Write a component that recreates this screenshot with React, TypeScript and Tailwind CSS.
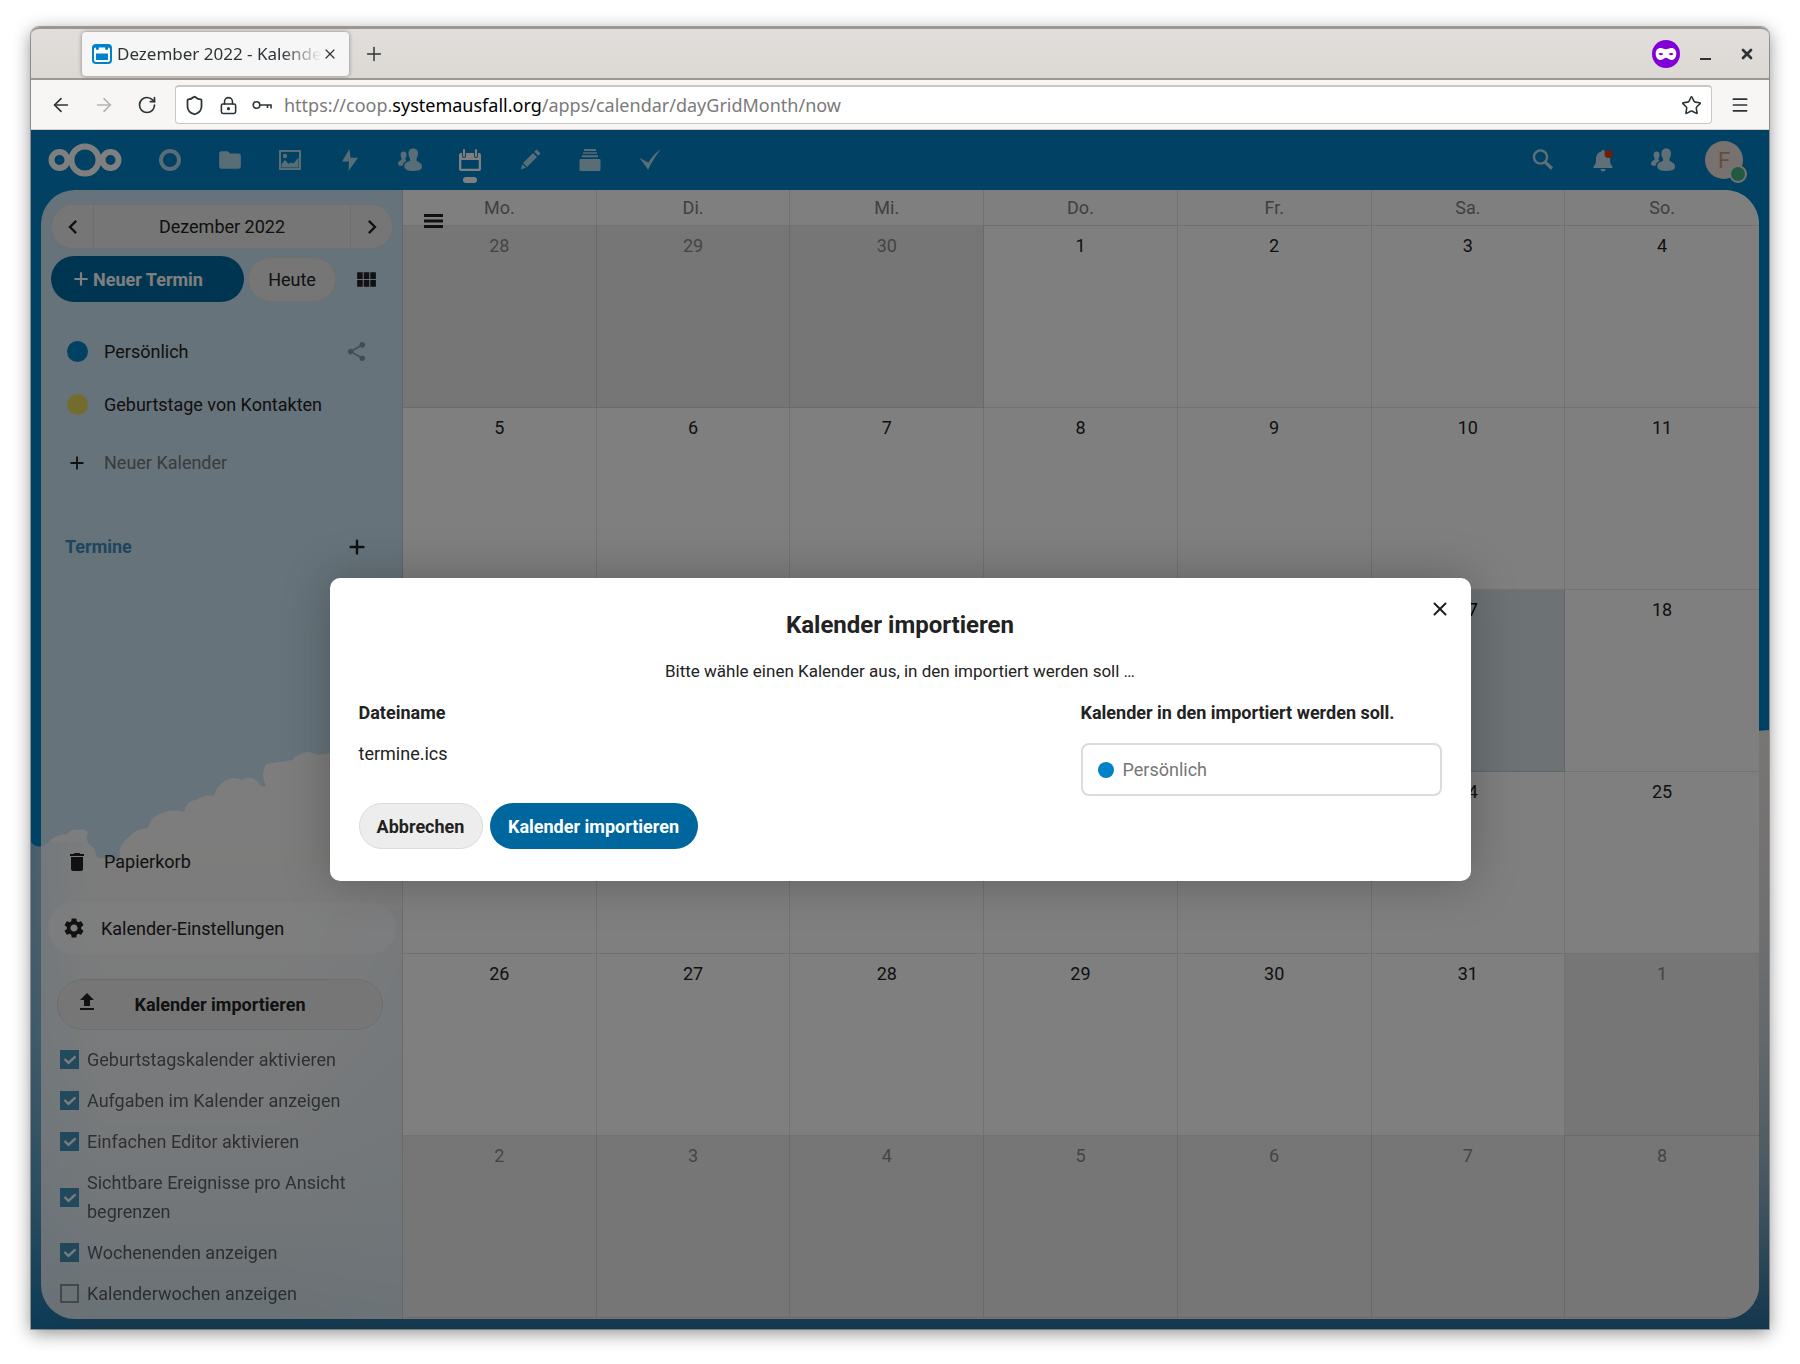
import { useState } from "react";
import type { ReactNode } from "react";
import { ArrowLeft, ArrowRight, Plus, X, Star, Menu, LockKeyhole, Shield, RotateCw } from "lucide-react";
import {
  MdChevronLeft,
  MdChevronRight,
  MdDelete,
  MdFileUpload,
  MdFolder,
  MdSettings,
  MdShare,
  MdViewModule,
} from "react-icons/md";

const WEEKDAYS = ["Mo.", "Di.", "Mi.", "Do.", "Fr.", "Sa.", "So."];

const WEEKS = [
  [28, 29, 30, 1, 2, 3, 4],
  [5, 6, 7, 8, 9, 10, 11],
  [12, 13, 14, 15, 16, 17, 18],
  [19, 20, 21, 22, 23, 24, 25],
  [26, 27, 28, 29, 30, 31, 1],
  [2, 3, 4, 5, 6, 7, 8],
];

const SETTINGS = [
  { id: "birthday", label: "Geburtstagskalender aktivieren", checked: true },
  { id: "tasks", label: "Aufgaben im Kalender anzeigen", checked: true },
  { id: "simple", label: "Einfachen Editor aktivieren", checked: true },
  { id: "limit", label: "Sichtbare Ereignisse pro Ansicht begrenzen", checked: true },
  { id: "weekends", label: "Wochenenden anzeigen", checked: true },
  { id: "weeks", label: "Kalenderwochen anzeigen", checked: false },
];

const NextcloudLogo = () => (
  <svg className="w-[74px] h-[36px]" viewBox="0 0 74 36" fill="none" stroke="#fff">
    <circle cx="11.5" cy="18" r="8" strokeWidth="6" />
    <circle cx="37" cy="18" r="13.6" strokeWidth="6" />
    <circle cx="62.5" cy="18" r="8" strokeWidth="6" />
  </svg>
);

const DashboardIcon = () => (
  <svg className="w-6 h-6" viewBox="0 0 24 24" fill="none" stroke="currentColor">
    <circle cx="12" cy="12" r="9" strokeWidth="4" />
  </svg>
);

const PhotosIcon = () => (
  <svg className="w-6 h-6" viewBox="0 0 24 24" fill="currentColor">
    <path fillRule="evenodd" d="M1 2h22v20H1zM3 4v16h18V4z" />
    <circle cx="7" cy="8" r="2.2" />
    <path d="M3.5 19.500V16l3.500-4 3.500 4 2-1.500 3 1 5-6v10z" />
  </svg>
);

const ActivityIcon = () => (
  <svg className="w-6 h-6" viewBox="0 0 24 24" fill="currentColor">
    <path d="M11.500 1L4 13.500h7l-.5 9.500L20 9.800h-7.500z" />
  </svg>
);

const ContactsIcon = () => (
  <svg className="w-6 h-6" viewBox="0 0 24 24" fill="currentColor">
    <path d="M15 0.500c-3 0-4.700 2.200-4.500 5.300.1 2 .6 3.500 1.500 4.700v2.300c-2 1-5 1.700-5.600 4-.6 3 .6 6.200 8.600 6.200s9-2 9-4.700c0-3-3.500-4-5.500-5.500v-2.300c.9-1.200 1.400-2.700 1.500-4.700.2-3.100-1.500-5.300-5-5.300z" />
    <path d="M5.500 3.500C3.500 3.500 2.500 5 2.600 7c.1 1.500.5 2.400 1 3v1.800C2 12.800 0 13.500 0 15.800 0 17.600 1.500 18 4.500 18c.3-2.800 2-4 4.300-5.200-.7-.4-1-.6-1.300-1V10c.5-.6 1-1.500 1.100-3 .1-2-1-3.500-3.100-3.500z" />
  </svg>
);

const CalendarIcon = () => (
  <svg className="w-6 h-6" viewBox="0 0 24 24" fill="currentColor">
    <path fillRule="evenodd" d="M1 7a2 2 0 0 1 2-2h1v3a2 2 0 0 0 4 0V5h8v3a2 2 0 0 0 4 0V5h1a2 2 0 0 1 2 2v14a2 2 0 0 1-2 2H3a2 2 0 0 1-2-2zM3.300 12v8.700h17.400V12z" />
    <rect x="5" y="1" width="2" height="8" rx="1" />
    <rect x="17" y="1" width="2" height="8" rx="1" />
  </svg>
);

const NotesIcon = () => (
  <svg className="w-6 h-6" viewBox="0 0 24 24" fill="currentColor">
    <path d="M18.500 1.500l4 4-2.300 2.200-3.900-3.900zM15 5l4 4-10 10-4-4zM4.200 16.200l3.700 3.600L3 21.500z" />
  </svg>
);

const DeckIcon = () => (
  <svg className="w-6 h-6" viewBox="0 0 24 24" fill="currentColor">
    <path d="M6 1h12v2H6zM5 4.200h14v1.600H5zM4 7.200h16v2H4zM2.500 11h19a1 1 0 0 1 1 1v9.500a1.500 1.500 0 0 1-1.500 1.500H3a1.500 1.500 0 0 1-1.500-1.500V12a1 1 0 0 1 1-1z" />
  </svg>
);

const TasksIcon = () => (
  <svg className="w-6 h-6" viewBox="0 0 24 24" fill="currentColor">
    <path d="M22.500 1.500C18 4.500 13.500 9 10.500 14.500L1.500 10C4.500 14 7.500 17.500 10 22 13.500 14.500 17.500 8.500 22.500 1.500z" />
  </svg>
);

const SearchIcon = () => (
  <svg className="w-6 h-6" viewBox="0 0 24 24" fill="none" stroke="currentColor">
    <circle cx="9.500" cy="9" r="6.600" strokeWidth="2.400" />
    <path d="M14.500 14.500l6.500 6" strokeWidth="3.200" />
  </svg>
);

const BellIcon = () => (
  <svg className="w-6 h-6" viewBox="0 0 24 24" fill="currentColor">
    <path d="M12 2c-1 0-1.500.6-1.500 1.400C6.500 4.300 5 7.500 5 11c0 4-.8 6-2.500 7.500V20h19v-1.500C19.800 17 19 15 19 11c0-3.500-1.500-6.700-5.500-7.600C13.500 2.600 13 2 12 2zM9.500 21a2.500 2.500 0 0 0 5 0z" />
    <circle cx="17.500" cy="6" r="4" fill="#d6411b" />
  </svg>
);

const HamburgerIcon = () => (
  <svg className="w-5 h-[14px]" viewBox="0 0 20 14" fill="currentColor">
    <path d="M0 0h19v3H0zM0 5.500h19v3H0zM0 11h19v3H0z" />
  </svg>
);

const KeyIcon = () => (
  <svg className="w-5 h-5" viewBox="0 0 20 20" fill="none" stroke="currentColor" strokeWidth="1.600">
    <circle cx="4.500" cy="10" r="3.300" />
    <path d="M8 10h11v3.500M15.500 10v3" />
  </svg>
);

const PrivateMask = () => (
  <svg className="w-7 h-7" viewBox="0 0 28 28">
    <circle cx="14" cy="14" r="14" fill="#8000d7" />
    <path fillRule="evenodd" fill="#fff" d="M8.500 8c2.500 0 4 1.300 5.500 1.300S17 8 19.500 8c3 0 4.800 2.400 4.800 5.500 0 4-2 6.500-5 6.500-2.600 0-3.700-2.200-5.300-2.200S11.300 20 8.700 20c-3 0-5-2.500-5-6.500C3.700 10.400 5.500 8 8.500 8zM6.300 14c1.200 1.500 3.800 1.500 5.200 0-1.400-1.500-4-1.500-5.200 0zM16.500 14c1.400 1.500 4 1.500 5.200 0-1.200-1.500-3.800-1.500-5.200 0z" />
  </svg>
);

const Favicon = () => (
  <svg className="w-5 h-5 shrink-0" viewBox="0 0 20 20">
    <rect width="20" height="20" rx="4" fill="#0082c9" />
    <path fillRule="evenodd" fill="#fff" d="M2 5.500A2 2 0 0 1 4 3.500v1.200a1.400 1.400 0 0 0 2.800 0V3.500h6.400v1.200a1.400 1.400 0 0 0 2.800 0V3.500a2 2 0 0 1 2 2V16a2 2 0 0 1-2 2H4a2 2 0 0 1-2-2zM4 9.500V16h12V9.500z" />
  </svg>
);

// Sky with a bank of clouds, the wallpaper behind the app
const Wallpaper = () => (
  <svg className="absolute inset-0 w-full h-full" viewBox="0 0 1738 1199" preserveAspectRatio="none">
    <defs>
      <linearGradient id="cloud" x1="0" y1="560" x2="0" y2="1199" gradientUnits="userSpaceOnUse">
        <stop offset="0" stopColor="#f4efec" />
        <stop offset="0.35" stopColor="#e2e0e0" />
        <stop offset="0.55" stopColor="#c6d2da" />
        <stop offset="0.7" stopColor="#a3bccb" />
        <stop offset="0.82" stopColor="#7ba3bc" />
        <stop offset="0.95" stopColor="#3c7ba2" />
        <stop offset="1" stopColor="#266f9c" />
      </linearGradient>
      <linearGradient id="edge" x1="0" x2="70" gradientUnits="userSpaceOnUse">
        <stop offset="0" stopColor="#0082c9" stopOpacity="0.4" />
        <stop offset="1" stopColor="#0082c9" stopOpacity="0" />
      </linearGradient>
      <linearGradient id="haze" x1="250" x2="372" gradientUnits="userSpaceOnUse">
        <stop offset="0" stopColor="#5b9cc8" stopOpacity="0" />
        <stop offset="1" stopColor="#5b9cc8" stopOpacity="0.4" />
      </linearGradient>
    </defs>
    <rect width="1738" height="1199" fill="#0082c9" />
    <path
      fill="url(#cloud)"
      d="M0 712q6 8 16 2q8-10 20-10q4-6 12-4q5-2 9 2q-4 10 6 16q2 10 6 10l8 0q8 6 12-2q-2-12 8-18q8-10 20-10q3-12 12-14q10-6 24-2q3-12 12-12q8-6 18-4q2-10 12-16q8-4 16 0q8-6 16 2q4 6 8 4q-6-12 0-22q14-2 26-4q8-8 18-8q6 4 14 2l60-12L900 560L1500 620L1738 600V1199H0z"
    />
    <rect y="712" width="70" height="487" fill="url(#edge)" />
    <rect x="250" y="780" width="122" height="409" fill="url(#haze)" />
  </svg>
);

const APPS = [
  { name: "Dashboard", icon: <DashboardIcon /> },
  { name: "Dateien", icon: <MdFolder className="w-[26px] h-[26px]" /> },
  { name: "Fotos", icon: <PhotosIcon /> },
  { name: "Aktivitäten", icon: <ActivityIcon /> },
  { name: "Kontakte", icon: <ContactsIcon /> },
  { name: "Kalender", icon: <CalendarIcon />, active: true },
  { name: "Notizen", icon: <NotesIcon /> },
  { name: "Deck", icon: <DeckIcon /> },
  { name: "Aufgaben", icon: <TasksIcon /> },
];

function BrowserChrome() {
  return (
    <div className="font-['Noto_Sans',sans-serif] text-[#2e3436]">
      <div className="flex items-center h-[53px] pl-[51px] pr-[14px] rounded-t-lg border-t-2 border-b-2 border-[#9b9794] bg-gradient-to-b from-[#e2dedb] to-[#dcd8d4]">
        <div className="flex items-center w-[267px] h-11 pl-[10px] pr-3 rounded bg-[#f6f6f6] shadow-[0_0_4px_rgba(0,0,0,0.4)]">
          <Favicon />
          <span className="flex-1 ml-[5px] whitespace-nowrap text-[17px] leading-6 [mask-image:linear-gradient(to_right,#000_80%,transparent)]">
            Dezember 2022 - Kalende
          </span>
          <button aria-label="Tab schließen">
            <X className="w-4 h-4" strokeWidth={1.8} />
          </button>
        </div>
        <button className="ml-[14px]" aria-label="Neuer Tab">
          <Plus className="w-[22px] h-[22px]" strokeWidth={1.6} />
        </button>
        <div className="flex items-center ml-auto">
          <PrivateMask />
          <button className="flex items-end w-[11px] h-3 ml-5" aria-label="Minimieren">
            <span className="w-full h-[2px] bg-[#2e3436]" />
          </button>
          <button className="ml-7" aria-label="Schließen">
            <X className="w-4 h-4" strokeWidth={4} />
          </button>
        </div>
      </div>
      <div className="flex items-center h-[50px] px-[19px] border-b border-[#d3cfcb] bg-[#f7f6f5]">
        <button aria-label="Zurück">
          <ArrowLeft className="w-[22px] h-[22px]" strokeWidth={1.8} />
        </button>
        <button className="ml-[21px] text-[#b4b4b4]" aria-label="Vor">
          <ArrowRight className="w-[22px] h-[22px]" strokeWidth={1.8} />
        </button>
        <button className="ml-[22px]" aria-label="Neu laden">
          <RotateCw className="w-5 h-5" strokeWidth={2} />
        </button>
        <div className="flex flex-1 items-center h-[39px] ml-[18px] pl-2 pr-[9px] rounded border border-t-2 border-[#cdc7c2] bg-white">
          <Shield className="w-[21px] h-[21px]" strokeWidth={2} />
          <LockKeyhole className="w-[19px] h-[19px] ml-[14px]" strokeWidth={2} />
          <span className="ml-[14px]">
            <KeyIcon />
          </span>
          <span className="ml-3 text-[18px] leading-6 text-[#7a7a7a]">
            https://coop.<span className="text-black">systemausfall.org</span>/apps/calendar/dayGridMonth/now
          </span>
          <button className="ml-auto" aria-label="Lesezeichen">
            <Star className="w-[21px] h-[21px]" strokeWidth={1.8} />
          </button>
        </div>
        <button className="ml-[18px]" aria-label="Menü">
          <Menu className="w-5 h-5" strokeWidth={2} />
        </button>
      </div>
    </div>
  );
}

function AppHeader() {
  return (
    <header className="relative flex items-center h-[60px] pl-[17px] pr-[26px] bg-[#0082c9] text-white">
      <a href="#home" aria-label="Nextcloud">
        <NextcloudLogo />
      </a>
      <nav className="flex ml-[18px]">
        {APPS.map((app) => (
          <a
            key={app.name}
            href={`#${app.name}`}
            aria-label={app.name}
            className={`relative flex items-center justify-center w-[60px] h-[60px] ${app.active ? "" : "text-white/70"}`}
          >
            {app.icon}
            {app.active && <span className="absolute bottom-[7px] w-[14px] h-[6px] rounded-full bg-white" />}
          </a>
        ))}
      </nav>
      <div className="flex items-center ml-auto text-white/75">
        <button className="flex justify-center w-[60px]" aria-label="Suche">
          <SearchIcon />
        </button>
        <button className="flex justify-center w-[60px]" aria-label="Benachrichtigungen">
          <BellIcon />
        </button>
        <button className="flex justify-center w-[60px]" aria-label="Kontakte">
          <ContactsIcon />
        </button>
        <button
          className="relative flex items-center justify-center w-[38px] h-[38px] ml-3 rounded-full bg-[#efe4df] text-[22px] text-[#d09b76]"
          aria-label="Konto"
        >
          F
          <span className="absolute -right-1 -bottom-1 w-[18px] h-[18px] rounded-full border-2 border-[#e8e8e8] bg-[#49b382]" />
        </button>
      </div>
    </header>
  );
}

function SideRow({ icon, children, action }: { icon: ReactNode; children: ReactNode; action?: ReactNode }) {
  return (
    <div className="flex items-center h-[53px] pl-6 pr-[34px]">
      <span className="flex justify-center w-6 mr-[15px]">{icon}</span>
      {children}
      {action && <span className="flex ml-auto">{action}</span>}
    </div>
  );
}

function Sidebar() {
  const [settings, setSettings] = useState(SETTINGS);

  const toggle = (id: string) => {
    setSettings(settings.map((s) => (s.id === id ? { ...s, checked: !s.checked } : s)));
  };

  return (
    <aside className="flex flex-col w-[362px] shrink-0 border-r border-black/10 bg-white/80 text-[#222]">
      <div className="flex h-[45px] mt-[14px] ml-[10px] mr-[9px] rounded-full border border-[#e0e0e0] bg-[#ededed]">
        <button className="flex items-center justify-center w-[41px]" aria-label="Vorheriger Monat">
          <MdChevronLeft className="w-7 h-7" />
        </button>
        <button className="flex-1 border-x border-[#dbdbdb]">Dezember 2022</button>
        <button className="flex items-center justify-center w-[41px]" aria-label="Nächster Monat">
          <MdChevronRight className="w-7 h-7" />
        </button>
      </div>
      <div className="flex items-center mt-[7px] pl-[10px]">
        <button className="flex items-center w-[193px] h-[46px] pl-5 rounded-full bg-[#006aa3] font-bold text-white">
          <Plus className="w-5 h-5 mr-[2px]" strokeWidth={2.6} />
          Neuer Termin
        </button>
        <button className="w-[88px] h-[45px] ml-1 rounded-full border border-[#e0e0e0] bg-[#ededed]">Heute</button>
        <button className="ml-[18px]" aria-label="Ansicht wechseln">
          <MdViewModule className="w-[25px] h-[25px]" />
        </button>
      </div>

      <div className="mt-[23px]">
        <SideRow
          icon={<span className="w-[21px] h-[21px] rounded-full bg-[#0082c9]" />}
          action={
            <button aria-label="Kalender teilen" className="text-[#222]/40">
              <MdShare className="w-[23px] h-[23px]" />
            </button>
          }
        >
          Persönlich
        </SideRow>
        <SideRow icon={<span className="w-[21px] h-[21px] rounded-full bg-[#e9d859]" />}>Geburtstage von Kontakten</SideRow>
      </div>
      <div className="mt-[5px] text-[#767676]">
        <SideRow icon={<Plus className="w-5 h-5 text-[#222]" strokeWidth={2.2} />}>Neuer Kalender</SideRow>
      </div>
      <div className="flex items-center h-[53px] mt-[31px] pl-6 pr-[34px]">
        <h2 className="font-bold text-[#3e8cb8]">Termine</h2>
        <button className="ml-auto" aria-label="Termin hinzufügen">
          <Plus className="w-[22px] h-[22px]" strokeWidth={2.6} />
        </button>
      </div>

      <div className="mt-auto">
        <SideRow icon={<MdDelete className="w-6 h-6" />}>Papierkorb</SideRow>
        <button className="flex items-center w-[348px] h-[52px] mt-[14px] ml-[7px] pl-[14px] rounded-full bg-white/60">
          <MdSettings className="w-6 h-6 mr-[15px]" />
          Kalender-Einstellungen
        </button>
        <button className="relative w-[326px] h-[51px] mt-[25px] ml-4 rounded-full border border-[#dbdbdb] bg-[#ededed] font-bold">
          <MdFileUpload className="absolute left-[17px] top-[10px] w-6 h-6" />
          Kalender importieren
        </button>
        <ul className="flex flex-col gap-3 mt-[15px] mb-[11px] pl-[19px] pr-9 leading-[29px]">
          {settings.map((s) => (
            <li key={s.id} className="flex items-center opacity-70">
              <span className="relative flex shrink-0 w-[19px] h-[19px]">
                <input
                  id={s.id}
                  type="checkbox"
                  checked={s.checked}
                  onChange={() => toggle(s.id)}
                  className="w-full h-full appearance-none border-2 border-[#6b6b6b] checked:border-0 checked:bg-[#006aa3]"
                />
                {s.checked && (
                  <svg className="absolute inset-0 pointer-events-none" viewBox="0 0 19 19" fill="none" stroke="#fff" strokeWidth="2.400">
                    <path d="M4.500 9l4 3.800 7-6.500" />
                  </svg>
                )}
              </span>
              <label htmlFor={s.id} className="ml-2">
                {s.label}
              </label>
            </li>
          ))}
        </ul>
      </div>
    </aside>
  );
}

function MonthGrid() {
  return (
    <section className="relative flex-1 bg-[#ededed]">
      <button className="absolute left-[21px] top-6 text-[#222]" aria-label="Navigation umschalten">
        <HamburgerIcon />
      </button>
      <table className="w-full table-fixed border-separate border-spacing-0 text-center">
        <thead>
          <tr className="h-9 bg-white text-[#808080]">
            {WEEKDAYS.map((day) => (
              <th key={day} className="border-r border-b border-black/10 font-normal last:border-r-0">
                {day}
              </th>
            ))}
          </tr>
        </thead>
        <tbody>
          {WEEKS.map((week, row) => (
            <tr key={row}>
              {week.map((day, col) => {
                const outside = (row === 0 && day > 20) || (row > 3 && day < 10);
                const today = row === 2 && day === 17;
                return (
                  <td
                    key={col}
                    className={`h-[182px] pt-[6px] align-top border-r border-b border-black/10 last:border-r-0 ${
                      outside ? "bg-[#ededed] text-[#8a8a8a]" : today ? "bg-[#dbe5ea]" : "bg-white text-[#222]"
                    }`}
                  >
                    {day}
                  </td>
                );
              })}
            </tr>
          ))}
        </tbody>
      </table>
    </section>
  );
}

function ImportModal() {
  return (
    <div className="absolute inset-0 flex items-center justify-center bg-black/50">
      <div
        role="dialog"
        aria-labelledby="import-title"
        className="relative w-[1141px] max-w-[90%] px-[29px] pt-[29px] pb-8 rounded-[10px] bg-white text-[#222] shadow-[0_0_48px_rgba(0,0,0,0.25)]"
      >
        <button className="absolute right-5 top-5" aria-label="Schließen">
          <X className="w-[22px] h-[22px]" strokeWidth={2.2} />
        </button>
        <h2 id="import-title" className="text-center text-[24px] leading-9 font-bold">
          Kalender importieren
        </h2>
        <p className="mt-[15px] text-center text-[17px]">Bitte wähle einen Kalender aus, in den importiert werden soll …</p>
        <div className="grid grid-cols-[1fr_361px] gap-y-[14px] mt-[14px]">
          <h3 className="font-bold">Dateiname</h3>
          <label htmlFor="target" className="font-bold">
            Kalender in den importiert werden soll.
          </label>
          <p>termine.ics</p>
          <div className="relative mt-[3px]">
            <span className="absolute left-[17px] top-[19px] w-4 h-4 rounded-full bg-[#0082c9]" />
            <select
              id="target"
              className="w-full h-[53px] pl-10 appearance-none rounded-lg border-2 border-[#dbdbdb] bg-white text-[#767676]"
            >
              <option>Persönlich</option>
            </select>
          </div>
        </div>
        <div className="flex gap-[7px] mt-[7px]">
          <button className="w-[124px] h-[46px] rounded-full border border-[#dbdbdb] bg-[#ededed] font-bold">Abbrechen</button>
          <button className="w-[208px] h-[46px] rounded-full bg-[#00679e] font-bold text-white">Kalender importieren</button>
        </div>
      </div>
    </div>
  );
}

export default function App() {
  return (
    <div className="flex flex-col min-h-screen px-[31px] pt-[27px] pb-[35px] bg-white">
      <div className="flex flex-1 flex-col rounded-t-lg shadow-[0_0_0_1px_rgba(0,0,0,0.3),0_4px_18px_rgba(0,0,0,0.45)]">
        <BrowserChrome />
        <div className="relative flex flex-1 flex-col font-[Roboto,sans-serif] text-[18px] leading-[27px]">
          <Wallpaper />
          <AppHeader />
          <main className="relative flex flex-1 mx-[10px] mb-[10px] rounded-[34px] overflow-hidden">
            <Sidebar />
            <MonthGrid />
          </main>
          <ImportModal />
        </div>
      </div>
    </div>
  );
}
